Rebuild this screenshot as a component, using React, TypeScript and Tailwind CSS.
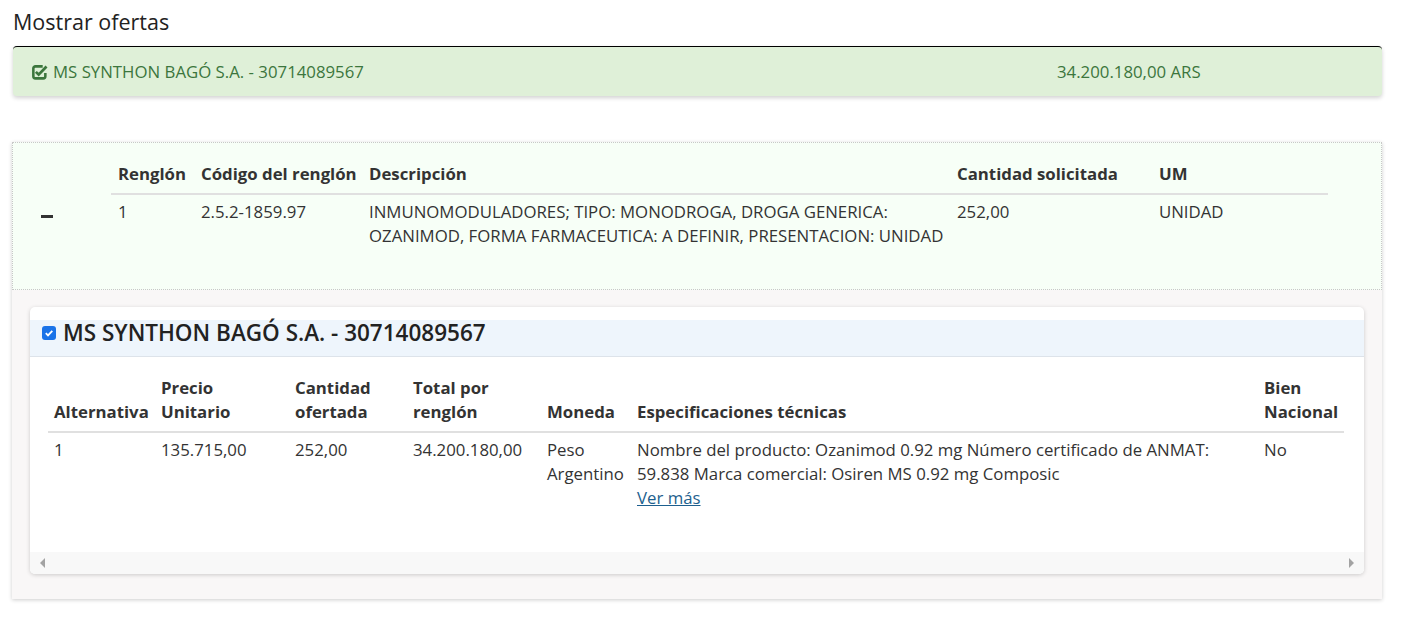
import React from 'react';

const sans = { fontFamily: '"Open Sans", "Liberation Sans", sans-serif' };

interface Renglon {
  numero: string;
  codigo: string;
  descripcion: string;
  cantidad: string;
  um: string;
}

interface Oferta {
  alternativa: string;
  precio: string;
  cantidad: string;
  total: string;
  moneda: string;
  especificaciones: string;
  nacional: string;
}

const renglon: Renglon = {
  numero: '1',
  codigo: '2.5.2-1859.97',
  descripcion:
    'INMUNOMODULADORES; TIPO: MONODROGA, DROGA GENERICA: OZANIMOD, FORMA FARMACEUTICA: A DEFINIR, PRESENTACION: UNIDAD',
  cantidad: '252,00',
  um: 'UNIDAD',
};

const oferta: Oferta = {
  alternativa: '1',
  precio: '135.715,00',
  cantidad: '252,00',
  total: '34.200.180,00',
  moneda: 'Peso Argentino',
  especificaciones:
    'Nombre del producto: Ozanimod 0.92 mg Número certificado de ANMAT: 59.838 Marca comercial: Osiren MS 0.92 mg Composic',
  nacional: 'No',
};

function CheckSquareIcon() {
  return (
    <svg width="17" height="16" viewBox="0 0 16 15" className="shrink-0">
      <path
        d="M11 2.2H4.2a2 2 0 0 0-2 2v7.3a2 2 0 0 0 2 2h7.3a2 2 0 0 0 2-2V8.5"
        fill="none"
        stroke="#3c763d"
        strokeWidth="2.4"
      />
      <path d="M4.6 7.4l2.6 2.6 7.4-7.6" fill="none" stroke="#3c763d" strokeWidth="2.6" />
    </svg>
  );
}

function Checkbox() {
  return (
    <span className="flex h-[14px] w-[14px] shrink-0 items-center justify-center rounded-[3px] bg-[#1a73e8]">
      <svg width="10" height="10" viewBox="0 0 10 10">
        <path d="M1.8 5.2l2.2 2.2 4.3-4.6" fill="none" stroke="white" strokeWidth="1.8" />
      </svg>
    </span>
  );
}

export default function App() {
  return (
    <div className="min-h-[619px] bg-white text-[#333] px-3 pt-[8px]" style={sans}>
      <h2 className="ml-[1px] text-[21.5px] font-medium leading-[28px] text-[#222]">Mostrar ofertas</h2>

      {/* oferta adjudicada */}
      <div className="mt-[10px] mr-[9px] ml-[1px] flex h-[50px] items-center rounded-[4px] border-t border-t-black bg-[#dff0d8] text-[16.8px] text-[#3c763d] shadow-[0_2px_4px_rgba(0,0,0,0.18)]">
        <div className="flex flex-1 items-center gap-[5px] pl-[18px]">
          <CheckSquareIcon />
          <span>MS SYNTHON BAGÓ S.A. - 30714089567</span>
        </div>
        <div className="w-[325px] shrink-0">34.200.180,00 ARS</div>
      </div>

      <section className="mt-[46px] mr-[9px] shadow-[0_1px_4px_rgba(0,0,0,0.2)]">
        {/* renglón */}
        <div className="flex h-[148px] border border-dotted border-[#c8c8c8] bg-[#f7fff7]">
          <div className="flex w-[98px] shrink-0 justify-center pt-[71px] pr-[30px]">
            <span className="mt-[1px] h-[3px] w-[12px] bg-[#333]" />
          </div>
          <table className="mt-[19px] h-fit w-[1217px] table-fixed border-collapse text-[16.8px] leading-[24px]">
            <colgroup>
              <col className="w-[83px]" />
              <col className="w-[168px]" />
              <col className="w-[588px]" />
              <col className="w-[202px]" />
              <col />
            </colgroup>
            <thead>
              <tr className="border-b-2 border-[#e0e0e0] text-left whitespace-nowrap">
                <th className="pl-[7px] pb-[7px] font-bold">Renglón</th>
                <th className="pl-[7px] pb-[7px] font-bold">Código del renglón</th>
                <th className="pl-[7px] pb-[7px] font-bold">Descripción</th>
                <th className="pl-[7px] pb-[7px] font-bold">Cantidad solicitada</th>
                <th className="pl-[7px] pb-[7px] font-bold">UM</th>
              </tr>
            </thead>
            <tbody>
              <tr className="align-top">
                <td className="pl-[7px] pt-[5px]">{renglon.numero}</td>
                <td className="pl-[7px] pt-[5px]">{renglon.codigo}</td>
                <td className="pl-[7px] pt-[5px]">{renglon.descripcion}</td>
                <td className="pl-[7px] pt-[5px]">{renglon.cantidad}</td>
                <td className="pl-[7px] pt-[5px]">{renglon.um}</td>
              </tr>
            </tbody>
          </table>
        </div>

        {/* ofertas del renglón */}
        <div className="bg-[#f9f7f7] px-[18px] pt-[17px] pb-[25px]">
          <div className="overflow-hidden rounded-[5px] bg-white pt-[13px] shadow-[0_1px_4px_rgba(0,0,0,0.18)]">
            <div className="flex h-[37px] items-start border-b border-[#dde3ea] bg-[#eef5fc] pl-[12px]">
              <div className="flex h-[26px] items-center gap-[7px]">
                <Checkbox />
                <span className="text-[22.5px] font-semibold leading-[26px] text-[#222]">
                  MS SYNTHON BAGÓ S.A. - 30714089567
                </span>
              </div>
            </div>

            <div className="px-[18px] pt-[19px]">
              <table className="w-[1296px] table-fixed border-collapse text-[16.8px] leading-[24px]">
                <colgroup>
                  <col className="w-[107px]" />
                  <col className="w-[134px]" />
                  <col className="w-[118px]" />
                  <col className="w-[134px]" />
                  <col className="w-[90px]" />
                  <col className="w-[627px]" />
                  <col />
                </colgroup>
                <thead>
                  <tr className="border-b-2 border-[#e0e0e0] text-left align-bottom">
                    <th className="px-[6px] pb-[7px] font-bold">Alternativa</th>
                    <th className="px-[6px] pb-[7px] font-bold">Precio Unitario</th>
                    <th className="px-[6px] pb-[7px] font-bold">Cantidad ofertada</th>
                    <th className="px-[6px] pb-[7px] font-bold">Total por renglón</th>
                    <th className="px-[6px] pb-[7px] font-bold">Moneda</th>
                    <th className="px-[6px] pb-[7px] font-bold">Especificaciones técnicas</th>
                    <th className="px-[6px] pb-[7px] font-bold">Bien Nacional</th>
                  </tr>
                </thead>
                <tbody>
                  <tr className="align-top">
                    <td className="px-[6px] pt-[5px]">{oferta.alternativa}</td>
                    <td className="px-[6px] pt-[5px]">{oferta.precio}</td>
                    <td className="px-[6px] pt-[5px]">{oferta.cantidad}</td>
                    <td className="px-[6px] pt-[5px]">{oferta.total}</td>
                    <td className="px-[6px] pt-[5px]">{oferta.moneda}</td>
                    <td className="px-[6px] pt-[5px]">
                      {oferta.especificaciones}
                      <br />
                      <a href="#" className="text-[#1d5f8e] underline">
                        Ver más
                      </a>
                    </td>
                    <td className="px-[6px] pt-[5px]">{oferta.nacional}</td>
                  </tr>
                </tbody>
              </table>
            </div>

            {/* barra de desplazamiento horizontal */}
            <div className="mt-[42px] flex h-[22px] items-center justify-between bg-[#f8f8f8] px-[10px]">
              <span className="h-0 w-0 border-y-[5px] border-r-[5px] border-y-transparent border-r-[#a3a3a3]" />
              <span className="h-0 w-0 border-y-[5px] border-l-[5px] border-y-transparent border-l-[#a3a3a3]" />
            </div>
          </div>
        </div>
      </section>
    </div>
  );
}
